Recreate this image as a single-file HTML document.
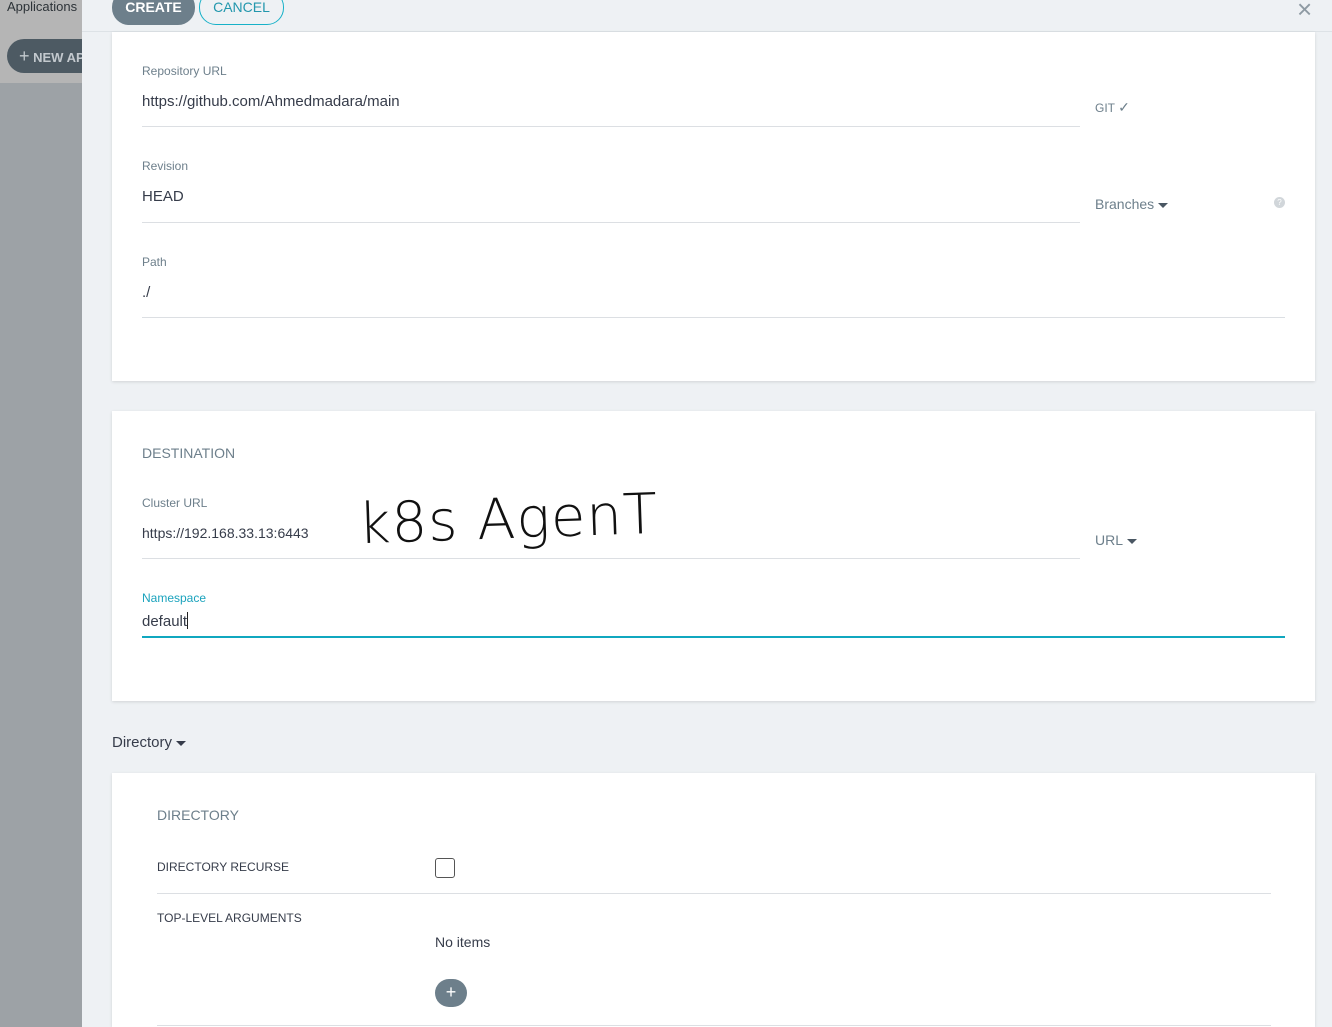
<!DOCTYPE html>
<html><head><meta charset="utf-8"><style>
*{margin:0;padding:0;box-sizing:border-box}
html,body{width:1332px;height:1027px;overflow:hidden}
body{font-family:"Liberation Sans",sans-serif;background:#eef1f4;position:relative}
.a{position:absolute}
.lbl{font-size:12px;color:#6d7f8b}
.val{font-size:15px;color:#363c4a}
.line{height:1px;background:#dcdfe3}
.card{background:#fff;box-shadow:0 1px 3px rgba(0,0,0,.12)}
.caret{display:inline-block;width:0;height:0;border-left:5px solid transparent;border-right:5px solid transparent;border-top:5px solid #4a5763;vertical-align:middle;margin-left:4px}
</style></head><body>
<div class="a" style="left:0;top:0;width:82px;height:1027px;background:#9da2a6"></div>
<div class="a" style="left:0;top:0;width:82px;height:83px;background:#b5b5b5"></div>
<div class="a" style="left:7px;top:-1px;font-size:13px;color:#2d3338">Applications</div>
<div class="a" style="left:7px;top:39px;width:100px;height:34px;border-radius:17px;background:#4d5a63;color:#c3c9ce;font-size:13px;font-weight:bold;line-height:34px;padding-left:12px;overflow:hidden"><span style="font-size:18px;font-weight:normal">+</span> NEW APP</div>
<div class="a" style="left:82px;top:0;width:1250px;height:1027px;background:#eef1f4"></div>
<div class="a" style="left:82px;top:31px;width:1250px;height:1px;background:#dde2e6"></div>
<div class="a" style="left:112px;top:-10px;width:83px;height:35px;border-radius:17px;background:#6d7f8b;color:#fff;font-size:14px;font-weight:bold;text-align:center;line-height:35px"><span style="position:relative;top:0px">CREATE</span></div>
<div class="a" style="left:199px;top:-10px;width:85px;height:35px;border-radius:17px;border:1px solid #17b1c8;color:#2297ad;font-size:14px;text-align:center;line-height:33px"><span style="position:relative;top:0px">CANCEL</span></div>
<div class="a" style="left:1297px;top:-6px;font-size:26px;color:#8e9aa3;font-weight:300">×</div>
<div class="a card" style="left:112px;top:32px;width:1203px;height:349px"></div>
<div class="a lbl" style="left:142px;top:64px">Repository URL</div>
<div class="a val" style="left:142px;top:93px">https://github.com/Ahmedmadara/main</div>
<div class="a line" style="left:142px;top:126px;width:938px"></div>
<div class="a lbl" style="left:1095px;top:99px">GIT <span style="color:#6d7f8b;font-size:14px">✓</span></div>
<div class="a lbl" style="left:142px;top:159px">Revision</div>
<div class="a val" style="left:142px;top:188px">HEAD</div>
<div class="a line" style="left:142px;top:222px;width:938px"></div>
<div class="a" style="left:1095px;top:196px;font-size:14px;color:#6d7f8b">Branches<span class="caret"></span></div>
<div class="a" style="left:1274px;top:197px;width:11px;height:11px;border-radius:50%;background:#d1d6da;color:#fff;font-size:8px;text-align:center;line-height:11px">?</div>
<div class="a lbl" style="left:142px;top:255px">Path</div>
<div class="a val" style="left:142px;top:284px">./</div>
<div class="a line" style="left:142px;top:317px;width:1143px"></div>
<div class="a card" style="left:112px;top:411px;width:1203px;height:290px"></div>
<div class="a" style="left:142px;top:445px;font-size:14px;color:#6d7f8b">DESTINATION</div>
<div class="a lbl" style="left:142px;top:496px">Cluster URL</div>
<div class="a val" style="left:142px;top:525px;font-size:14px">https://192.168.33.13:6443</div>
<div class="a" style="left:358px;top:492px;font-family:'DejaVu Sans',sans-serif;font-weight:200;font-size:56px;color:#111;letter-spacing:1px;transform:rotate(-2deg);line-height:1">k8s AgenT</div>
<div class="a line" style="left:142px;top:558px;width:938px"></div>
<div class="a" style="left:1095px;top:532px;font-size:14px;color:#6d7f8b">URL<span class="caret"></span></div>
<div class="a" style="left:142px;top:591px;font-size:12px;color:#1ba3bd">Namespace</div>
<div class="a val" style="left:142px;top:612px">default<span style="display:inline-block;width:1px;height:17px;background:#222;vertical-align:-3px"></span></div>
<div class="a" style="left:142px;top:636px;width:1143px;height:2px;background:#10a7bf"></div>
<div class="a" style="left:112px;top:734px;font-size:15px;color:#363c4a">Directory<span class="caret" style="border-top-color:#363c4a"></span></div>
<div class="a card" style="left:112px;top:773px;width:1203px;height:254px"></div>
<div class="a" style="left:157px;top:807px;font-size:14px;color:#6d7f8b">DIRECTORY</div>
<div class="a" style="left:157px;top:860px;font-size:12px;color:#363c4a">DIRECTORY RECURSE</div>
<div class="a" style="left:435px;top:858px;width:20px;height:20px;border:1px solid #555;border-radius:3px"></div>
<div class="a line" style="left:157px;top:893px;width:1114px"></div>
<div class="a" style="left:157px;top:911px;font-size:12px;color:#363c4a">TOP-LEVEL ARGUMENTS</div>
<div class="a" style="left:435px;top:934px;font-size:14px;color:#363c4a">No items</div>
<div class="a" style="left:435px;top:979px;width:32px;height:28px;border-radius:14px;background:#6d7f8b;color:#fff;font-size:18px;text-align:center;line-height:27px">+</div>
<div class="a line" style="left:157px;top:1025px;width:1114px"></div>
</body></html>
